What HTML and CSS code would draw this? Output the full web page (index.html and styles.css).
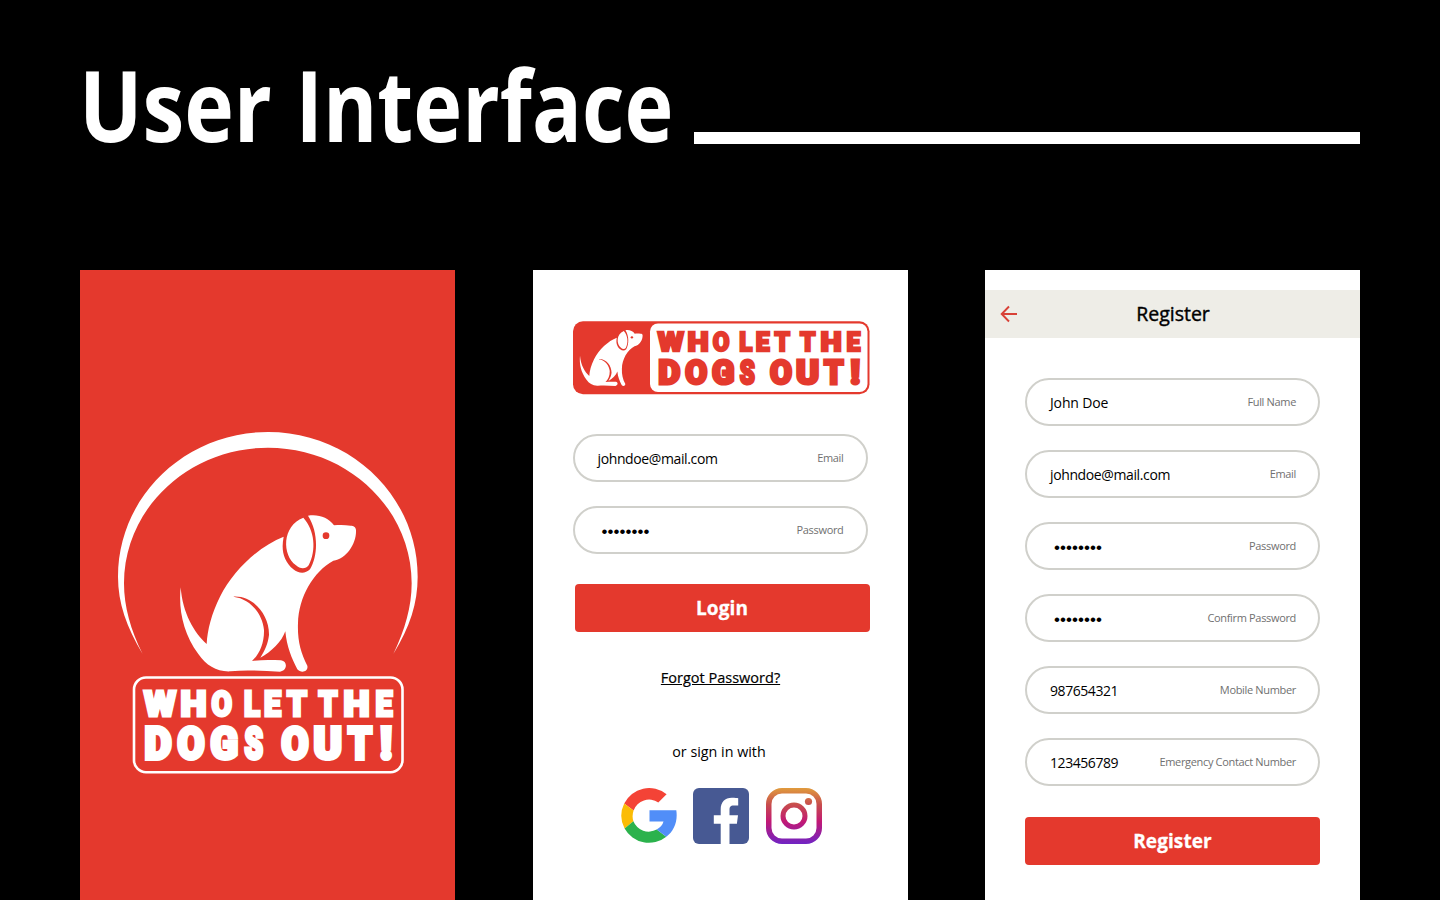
FILE: index.html
```html
<!DOCTYPE html>
<html lang="en">
<head>
<meta charset="utf-8">
<title>User Interface</title>
<link rel="stylesheet" href="styles.css">
</head>
<body>
<svg class="defs" width="0" height="0" aria-hidden="true">
  <defs>
    <symbol id="dog" viewBox="0 0 600 540" overflow="visible">
      <path fill="#fff" d="M341 110C270 137 190 210 150 290C125 340 112 390 110 432C72 398 38 340 32 262C25 330 40 400 85 462C110 497 140 516 182 514C230 508 280 513 330 515C352 512 354 484 333 481C305 480 275 479 246 483C268 463 283 430 282 390C278 345 245 297 190 290C250 286 298 345 297 405C294 430 286 450 271 473C305 455 335 425 346 394C350 440 365 475 382 508C392 520 416 517 412 497C392 458 382 420 384 370C386 290 430 215 490 182C530 177 560 130 558 90C557 80 550 77 542 77C525 75 510 75 492 76C475 52 445 42 414 47C445 95 445 165 420 208C405 223 385 220 370 208C340 182 333 150 341 110Z"/>
      <path fill="#fff" d="M400 53C434 90 440 150 416 196C408 208 390 208 378 196C336 165 335 78 400 53Z"/>
      <circle cx="468" cy="107" r="10" fill="#e4392d"/>
    </symbol>
  </defs>
</svg>

<header class="header">
  <h1 class="title">
    <svg width="614" height="120" viewBox="0 0 614 120"><text y="92"><tspan x="-1" textLength="193" lengthAdjust="spacingAndGlyphs">User</tspan> <tspan x="215.500" textLength="378" lengthAdjust="spacingAndGlyphs">Interface</tspan></text></svg>
  </h1>
  <div class="rule"></div>
</header>

<main class="screens">
  <section class="screen splash">
    <svg class="splash-logo" width="375" height="400" viewBox="80 400 375 400">
      <path transform="translate(100 420) scale(.33333)" fill="#fff" d="M128 702C80 620 54 550 54 470C54 230 255 36 504 36C753 36 953 230 953 470C953 550 930 620 880 702C915 630 935 560 935 490C935 265 742 83 504 83C266 83 72 265 72 490C72 560 92 630 128 702Z"/>
      <use href="#dog" x="170" y="500" width="200" height="180"/>
      <rect x="134" y="677.5" width="268.5" height="94.7" rx="12" fill="none" stroke="#fff" stroke-width="2.6"/>
      <g class="wordmark light">
        <text class="l1" y="715.500"><tspan x="144" textLength="32" lengthAdjust="spacingAndGlyphs">W</tspan><tspan x="180.500" textLength="26" lengthAdjust="spacingAndGlyphs">H</tspan><tspan x="211.500" textLength="20.500" lengthAdjust="spacingAndGlyphs">O</tspan> <tspan x="244" textLength="16" lengthAdjust="spacingAndGlyphs">L</tspan><tspan x="264" textLength="17" lengthAdjust="spacingAndGlyphs">E</tspan><tspan x="287" textLength="19" lengthAdjust="spacingAndGlyphs">T</tspan> <tspan x="318.500" textLength="19" lengthAdjust="spacingAndGlyphs">T</tspan><tspan x="343.500" textLength="26" lengthAdjust="spacingAndGlyphs">H</tspan><tspan x="375.500" textLength="17" lengthAdjust="spacingAndGlyphs">E</tspan></text>
        <text class="l2" y="758.800"><tspan x="144.500" textLength="27" lengthAdjust="spacingAndGlyphs">D</tspan><tspan x="177.500" textLength="27" lengthAdjust="spacingAndGlyphs">O</tspan><tspan x="210.500" textLength="27.500" lengthAdjust="spacingAndGlyphs">G</tspan><tspan x="244.500" textLength="18.500" lengthAdjust="spacingAndGlyphs">S</tspan> <tspan x="281.500" textLength="27" lengthAdjust="spacingAndGlyphs">O</tspan><tspan x="313.500" textLength="28.500" lengthAdjust="spacingAndGlyphs">U</tspan><tspan x="348" textLength="24" lengthAdjust="spacingAndGlyphs">T</tspan><tspan x="380" textLength="12" lengthAdjust="spacingAndGlyphs">!</tspan></text>
      </g>
    </svg>
  </section>

  <section class="screen login">
    <svg class="logo" width="297" height="74" viewBox="573 321 297 74">
      <rect x="573" y="321.300" width="296.500" height="73" rx="10" fill="#e4392d"/>
      <rect x="650" y="323.500" width="217.500" height="68.500" rx="8" fill="#fff"/>
      <use href="#dog" x="576.2" y="324.6" width="71.4" height="64.3"/>
      <g class="wordmark red" transform="translate(540.5 -187.7) scale(.815 .753)">
        <text class="l1" y="715.500"><tspan x="144" textLength="32" lengthAdjust="spacingAndGlyphs">W</tspan><tspan x="180.500" textLength="26" lengthAdjust="spacingAndGlyphs">H</tspan><tspan x="211.500" textLength="20.500" lengthAdjust="spacingAndGlyphs">O</tspan> <tspan x="244" textLength="16" lengthAdjust="spacingAndGlyphs">L</tspan><tspan x="264" textLength="17" lengthAdjust="spacingAndGlyphs">E</tspan><tspan x="287" textLength="19" lengthAdjust="spacingAndGlyphs">T</tspan> <tspan x="318.500" textLength="19" lengthAdjust="spacingAndGlyphs">T</tspan><tspan x="343.500" textLength="26" lengthAdjust="spacingAndGlyphs">H</tspan><tspan x="375.500" textLength="17" lengthAdjust="spacingAndGlyphs">E</tspan></text>
        <text class="l2" y="758.800"><tspan x="144.500" textLength="27" lengthAdjust="spacingAndGlyphs">D</tspan><tspan x="177.500" textLength="27" lengthAdjust="spacingAndGlyphs">O</tspan><tspan x="210.500" textLength="27.500" lengthAdjust="spacingAndGlyphs">G</tspan><tspan x="244.500" textLength="18.500" lengthAdjust="spacingAndGlyphs">S</tspan> <tspan x="281.500" textLength="27" lengthAdjust="spacingAndGlyphs">O</tspan><tspan x="313.500" textLength="28.500" lengthAdjust="spacingAndGlyphs">U</tspan><tspan x="348" textLength="24" lengthAdjust="spacingAndGlyphs">T</tspan><tspan x="380" textLength="12" lengthAdjust="spacingAndGlyphs">!</tspan></text>
      </g>
    </svg>
    <div class="fields">
      <div class="field"><span class="value">johndoe@mail.com</span><span class="label">Email</span></div>
      <div class="field"><span class="value dots">••••••••</span><span class="label">Password</span></div>
    </div>
    <div class="button login-button">Login</div>
    <a class="forgot">Forgot Password?</a>
    <p class="or">or sign in with</p>
    <div class="social">
      <svg width="56" height="56" viewBox="0 0 56 56">
        <path fill="#f44336" d="M3.200 15.500A27.700 27.700 0 0 1 45.600 6.300L37.300 14.400A16.500 16.500 0 0 0 12.600 22.600Z"/>
        <path fill="#fbbc05" d="M3.200 15.500A27.700 27.700 0 0 0 3.600 40.500L12.400 33.200A16.500 16.500 0 0 1 12.600 22.600Z"/>
        <path fill="#2bb24c" d="M3.600 40.500A27.700 27.700 0 0 0 45.300 48.700L35.700 41.600A16.500 16.500 0 0 1 12.400 33.200Z"/>
        <path fill="#518ef8" d="M28.500 22.300H55.300C57 33 53 43 45.300 48.700L35.700 41.600C39.500 39.500 41.500 37 42.500 33.600H28.500Z"/>
      </svg>
      <svg width="56" height="56" viewBox="0 0 56 56">
        <rect width="56" height="56" rx="6" fill="#475993"/>
        <path fill="#fff" d="M27.700 56V35.700H20.800V27.200H27.700V21.400C27.700 14 32 9.800 38.800 9.800C42 9.800 44.200 10 45.200 10.200V17.600H40.700C37.200 17.600 36.500 19.300 36.500 22V27.200H45L43.900 35.700H36.500V56Z"/>
      </svg>
      <svg width="56" height="56" viewBox="0 0 56 56">
        <defs><linearGradient id="ig" gradientUnits="userSpaceOnUse" x1="0" y1="0" x2="0" y2="56"><stop offset="0" stop-color="#e09b3d"/><stop offset=".3" stop-color="#c74c4d"/><stop offset=".6" stop-color="#c21975"/><stop offset="1" stop-color="#7024c4"/></linearGradient></defs>
        <path fill="url(#ig)" fill-rule="evenodd" d="M16 0H40A16 16 0 0 1 56 16V40A16 16 0 0 1 40 56H16A16 16 0 0 1 0 40V16A16 16 0 0 1 16 0ZM16 5.500A10.500 10.500 0 0 0 5.500 16V40A10.500 10.500 0 0 0 16 50.500H40A10.500 10.500 0 0 0 50.500 40V16A10.500 10.500 0 0 0 40 5.500Z"/>
        <circle cx="28" cy="28" r="11" fill="none" stroke="url(#ig)" stroke-width="5"/>
        <circle cx="42.500" cy="13.500" r="3.600" fill="url(#ig)"/>
      </svg>
    </div>
  </section>

  <section class="screen register">
    <div class="topbar">
      <svg class="back" width="18" height="18" viewBox="0 0 18 18" fill="none" stroke="#d84137" stroke-width="1.900"><path d="M17 9H2M9 1.500L1.700 9L9 16.500"/></svg>
      <h2 class="topbar-title">Register</h2>
    </div>
    <div class="fields">
      <div class="field"><span class="value name">John Doe</span><span class="label">Full Name</span></div>
      <div class="field"><span class="value">johndoe@mail.com</span><span class="label">Email</span></div>
      <div class="field"><span class="value dots">••••••••</span><span class="label">Password</span></div>
      <div class="field"><span class="value dots">••••••••</span><span class="label">Confirm Password</span></div>
      <div class="field"><span class="value digits">987654321</span><span class="label">Mobile Number</span></div>
      <div class="field"><span class="value digits">123456789</span><span class="label">Emergency Contact Number</span></div>
    </div>
    <div class="button register-button">Register</div>
  </section>
</main>
</body>
</html>
```
FILE: styles.css
```css
* { box-sizing: border-box; margin: 0; }
body { width: 1440px; height: 900px; overflow: hidden; background: #000; color: #000; font-family: "Open Sans", "Noto Sans", sans-serif; }
svg { display: block; }
.defs { height: 0; position: absolute; }
.header { height: 270px; padding: 50px 80px 0; display: flex; align-items: flex-start; }
.title { width: 614px; font: 700 98px "Open Sans", sans-serif; fill: #fff; }
.title svg { overflow: visible; }
.rule { flex: 1; height: 12px; margin-top: 82px; background: #fff; }
.screens { display: flex; justify-content: space-between; padding: 0 80px; }
.screen { width: 375px; height: 630px; background: #fff; }
.splash { background: #e4392d; padding-top: 130px; }
.wordmark { font-family: Roboto, sans-serif; font-weight: 900; }
.wordmark.light { fill: #fff; stroke: #fff; }
.wordmark.red { fill: #e4392d; stroke: #e4392d; }
.l1 { font-size: 35px; stroke-width: 3px; }
.l2 { font-size: 44px; stroke-width: 4px; }
.login { display: flex; flex-direction: column; padding: 51px 40px 0; }
.fields { display: flex; flex-direction: column; gap: 24px; }
.login .fields { margin-top: 39px; }
.field { width: 295px; height: 48px; border: 2px solid #d0d0cb; border-radius: 24px; padding: 0 22px 0 23px; display: flex; align-items: center; justify-content: space-between; }
.value { font-size: 14px; letter-spacing: -.38px; }
.name { letter-spacing: -.15px; }
.digits { letter-spacing: -.44px; }
.label { font-size: 11px; color: #707070; font-weight: 400; letter-spacing: -.33px; padding-bottom: 1px; }
.dots { font-family: "Liberation Sans", sans-serif; font-size: 17px; padding: 4px 0 0 4px; letter-spacing: .05px; }
.button { width: 295px; height: 48px; border-radius: 4px; background: #e4392d; color: #fff; font-size: 19px; font-weight: 700; line-height: 49px; text-align: center; letter-spacing: .1px; -webkit-text-stroke: .3px #fff; }
.login-button { margin: 30px 0 0 2px; }
.forgot { align-self: center; margin: 36px 0 0 1px; font-size: 14.500px; line-height: 20px; text-decoration: underline; -webkit-text-stroke: .2px #000; }
.or { align-self: center; margin: 54px 2px 0 0; font-size: 14.300px; line-height: 20px; }
.social { display: flex; gap: 16.500px; margin: 26px 0 0 48px; }
.register { padding-top: 20px; }
.topbar { height: 48px; background: #eeede7; display: flex; align-items: center; padding-left: 15px; }
.topbar-title { flex: 1; margin: 0 32px 2px 0; text-align: center; font-size: 19.500px; font-weight: 400; -webkit-text-stroke: .4px #000; }
.register .fields { padding: 40px 40px 0; }
.register-button { margin: 31px 0 0 40px; }
```
